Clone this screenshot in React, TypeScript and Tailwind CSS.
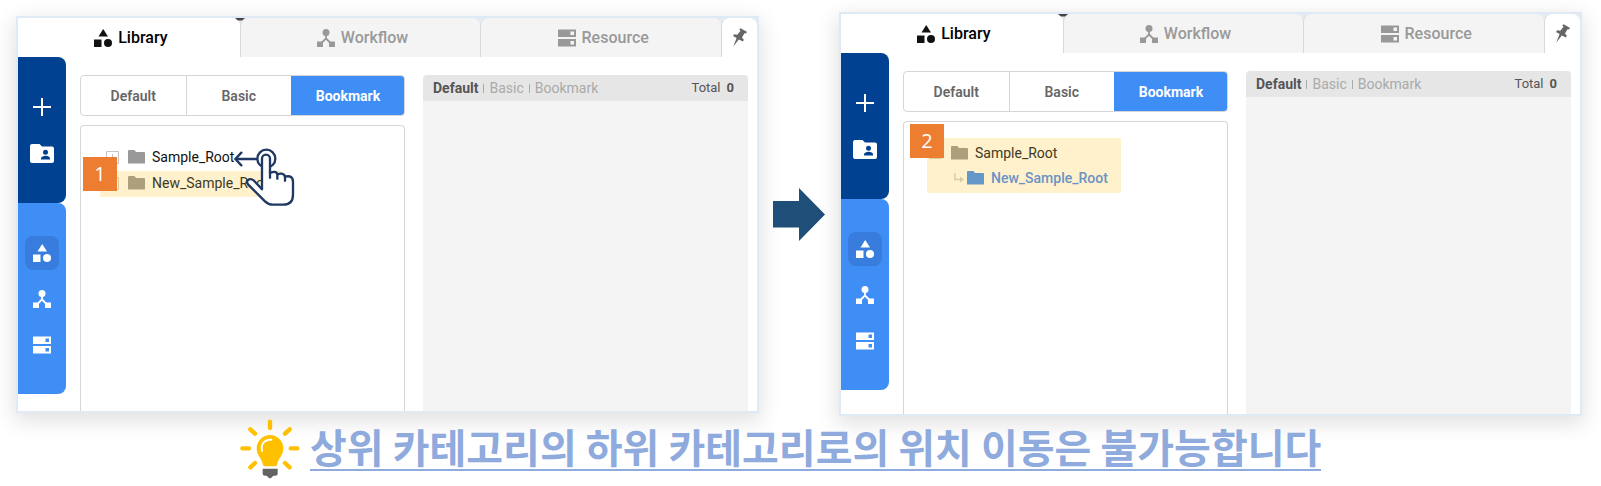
import React from "react";

type IconProps = { className?: string };

function ShapesIcon({ className }: IconProps) {
  return (
    <svg viewBox="0 0 18 18" className={className} fill="currentColor" aria-hidden="true">
      <path d="M9.2 0L14 7.5H4.5z" />
      <path d="M0 10.5h7.5V18H0z" />
      <circle cx="14" cy="14" r="4" />
    </svg>
  );
}

function WorkflowIcon({ className }: IconProps) {
  return (
    <svg viewBox="0 0 18 18" className={className} fill="currentColor" aria-hidden="true">
      <circle cx="9" cy="3.5" r="3.5" />
      <path d="M0 12.5h6V18H0zM12 12.5h6V18h-6z" />
      <path d="M9 5v4.5L4.5 14M9 9.500L13.5 14" fill="none" stroke="currentColor" strokeWidth="1.8" />
    </svg>
  );
}

function ResourceIcon({ className }: IconProps) {
  return (
    <svg viewBox="0 0 18 18" className={className} fill="currentColor" fillRule="evenodd" aria-hidden="true">
      <path d="M0 .5h18v7.500H0zM12.500 2.500v3.500h3.500V2.500zM0 10h18v7.500H0zM12.500 12v3.500h3.500V12z" />
    </svg>
  );
}

function PlusIcon() {
  return (
    <svg viewBox="0 0 18 18" className="size-[18px]" aria-hidden="true">
      <path d="M9 0v18M0 9h18" stroke="currentColor" strokeWidth="2" />
    </svg>
  );
}

function SharedFolderIcon() {
  return (
    <svg viewBox="0 0 24 19" className="h-[19px] w-6" aria-hidden="true">
      <path d="M2 0h7.500l2.500 2.500h10a2 2 0 0 1 2 2V17a2 2 0 0 1-2 2H2a2 2 0 0 1-2-2V2a2 2 0 0 1 2-2z" fill="currentColor" />
      <circle cx="15.500" cy="8.300" r="2.500" fill="#004191" />
      <path d="M11 15.500v-1.200c0-1.600 2.800-2.500 4.500-2.500s4.500.9 4.500 2.500v1.200z" fill="#004191" />
    </svg>
  );
}

function FolderIcon({ className }: IconProps) {
  return (
    <svg viewBox="0 0 17 14" className={`h-[14px] w-[17px] shrink-0 ${className ?? ""}`} fill="currentColor" aria-hidden="true">
      <path d="M1 0h5.500l1.500 2h8q1 0 1 1v10.500H0V1q0-1 1-1z" />
    </svg>
  );
}

function PinIcon() {
  return (
    <svg viewBox="0 0 16 20" className="h-5 w-4" fill="#666" aria-hidden="true">
      <path d="M7.300 1.600L8.600.2 14.800 3.800 14.200 5.600 12.500 5.300 10 9.500 11.800 11.800 11 13.500 6.800 11.400 1.300 18.500 4.600 10.100 1 8 2.200 6.300 5.300 6.700 8.500 2.800z" />
    </svg>
  );
}

function HandIcon() {
  return (
    <svg viewBox="0 0 186 177" className="h-[59px] w-[62px]" fill="none" stroke="#1f3864" strokeWidth="7" strokeLinecap="round" strokeLinejoin="round" aria-hidden="true">
      <path d="M72 33H7M25 14L7 33l18 19" />
      <circle cx="100" cy="32" r="27" />
      <path
        d="M87 124V32a12 12 0 0 1 24 0V75q20-8 22 4q20-6 23 7q24-6 24 16v38q0 30-30 30h-30q-14 0-24-10L45 109q-6-8 0-13q8-6 18 2z"
        fill="#fff"
      />
      <path d="M111 72v17M133 78v14M156 84v14" />
    </svg>
  );
}

function BulbIcon() {
  return (
    <svg viewBox="0 0 180 180" className="size-[60px] shrink-0" aria-hidden="true">
      <path
        d="M90 8v19M7 88h20M152 88h20M31 31l14 13M149 31l-14 13M31 145l14-13M149 145l-14-13"
        stroke="#ffc000"
        strokeWidth="13"
        strokeLinecap="round"
      />
      <path d="M90 48a40 40 0 0 1 40 40c0 22-14 28-19 49q-1 5-6 5H75q-5 0-6-5C64 116 50 110 50 88a40 40 0 0 1 40-40z" fill="#ffc000" />
      <path d="M66 96C62 76 72 61 94 62" fill="none" stroke="#fff" strokeWidth="6" strokeLinecap="round" />
      <path d="M68 149h45v15q0 6-7 6h-6l-6 6q-4 3-8 0l-6-6h-5q-7 0-7-6z" fill="#636363" />
    </svg>
  );
}

function TopTabs() {
  const tab = "flex items-center justify-center gap-1.5 text-base font-medium";
  return (
    <div className="relative flex h-[39px] bg-[#e3ebf5]">
      <button type="button" className={`${tab} w-[30%] rounded-tr-lg bg-white pl-1 text-black`}>
        <ShapesIcon className="size-[18px] text-[#111]" />
        Library
      </button>
      <button type="button" className={`${tab} flex-1 rounded-t-lg border-l border-[#d9d9d9] bg-[#f4f4f4] pl-1 text-[#999]`}>
        <WorkflowIcon className="size-[18px]" />
        Workflow
      </button>
      <button type="button" className={`${tab} flex-1 rounded-t-lg border-l border-[#d9d9d9] bg-[#f4f4f4] pl-1 text-[#999]`}>
        <ResourceIcon className="size-[18px]" />
        Resource
      </button>
      <button type="button" aria-label="Pin" className="flex w-9 items-center justify-center rounded-t-lg border-l border-[#d9d9d9] bg-white">
        <PinIcon />
      </button>
      <svg viewBox="0 0 10 3" className="absolute top-0 left-[30%] h-[3px] w-2.5 -translate-x-1/2" aria-hidden="true">
        <path d="M0 0h10L7 2.500H3z" fill="#444" />
      </svg>
    </div>
  );
}

function SideBar() {
  const item = "flex size-[34px] items-center justify-center rounded-lg";
  const group = "flex flex-col items-center gap-3 rounded-r-lg";
  return (
    <nav className="w-12 shrink-0 text-white">
      <div className={`${group} bg-[#004191] py-[33px]`}>
        <button type="button" aria-label="Add" className={item}><PlusIcon /></button>
        <button type="button" aria-label="Shared folder" className={item}><SharedFolderIcon /></button>
      </div>
      <div className={`${group} bg-[#3f8ef5] pt-[33px] pb-8`}>
        <button type="button" aria-label="Library" className={`${item} bg-[#387ddd]`}><ShapesIcon className="size-[18px]" /></button>
        <button type="button" aria-label="Workflow" className={item}><WorkflowIcon className="size-[18px]" /></button>
        <button type="button" aria-label="Resource" className={item}><ResourceIcon className="size-[18px]" /></button>
      </div>
    </nav>
  );
}

function FilterButtons() {
  const base = "flex-1 text-sm font-semibold";
  return (
    <div className="flex h-[41px] overflow-hidden rounded border border-[#d6d6d6] text-[#666]">
      <button type="button" className={base}>Default</button>
      <button type="button" className={`${base} border-l border-[#d6d6d6]`}>Basic</button>
      <button type="button" className="-my-px -mr-px w-[114px] bg-[#3f8ef5] text-sm font-bold text-white">Bookmark</button>
    </div>
  );
}

function Expander({ className }: IconProps) {
  return (
    <svg viewBox="0 0 13 13" className={`mr-[9px] size-[13px] shrink-0 ${className ?? ""}`} fill="none" stroke="currentColor" aria-hidden="true">
      <path d="M.5.500h12v12H.5zM6.500 3v7M3 6.500h7" />
    </svg>
  );
}

function Badge({ value, className }: { value: string; className: string }) {
  return (
    <span className={`absolute flex size-[34px] items-center justify-center bg-[#ed7d31] font-['Open_Sans',sans-serif] text-xl text-white ${className}`}>
      {value}
    </span>
  );
}

function Screen({ className, children }: { className: string; children: React.ReactNode }) {
  return (
    <section className={`flex flex-1 flex-col border-2 border-[#dfeaf5] bg-white shadow-[0_6px_20px_2px_rgba(0,0,0,0.12)] ${className}`}>
      <TopTabs />
      <div className="flex flex-1">
        <SideBar />
        <div className="ml-3.5 flex flex-1 flex-col gap-[9px] pt-[18px]">
          <FilterButtons />
          <div className="relative flex-1 rounded-t border-x border-t border-[#d6d6d6] text-sm">{children}</div>
        </div>
        <div className="mr-[9px] ml-[18px] flex flex-1 flex-col pt-[18px]">
          <div className="flex h-[26px] items-center justify-between rounded-t bg-[#e6e6e6] pr-3.5 pl-2.5 text-sm text-[#aaa]">
            <div className="flex items-center gap-[5px]">
              <b className="text-[#555]">Default</b>
              <i className="h-[9px] w-px bg-[#aaa]" />
              <span>Basic</span>
              <i className="h-[9px] w-px bg-[#aaa]" />
              <span>Bookmark</span>
            </div>
            <div className="flex gap-1.5 text-[13px] text-[#555]">
              Total <b>0</b>
            </div>
          </div>
          <div className="flex-1 bg-[#f4f4f4]" />
        </div>
      </div>
    </section>
  );
}

export default function App() {
  return (
    <main className="bg-white pb-2 font-['Roboto',sans-serif]">
      <div className="flex items-start pt-3 pr-[19px] pl-4">
        <Screen className="mt-1 min-h-[397px]">
          <ul className="pt-[19px]">
            <li className="ml-[19px] flex h-[26px] items-center pb-0.5 pl-1.5 text-[#111]">
              <Expander className="text-[#c4c4c4]" />
              <FolderIcon className="mr-[7px] text-[#999]" />
              Sample_Root
            </li>
            <li className="ml-[19px] flex h-[26px] w-[182px] items-center bg-[#fff1cc] pb-0.5 pl-1.5 text-[#40391f]">
              <Expander className="text-[#d8cba0]" />
              <FolderIcon className="mr-[7px] text-[#ad9f7b]" />
              New_Sample_Root
            </li>
          </ul>
          <Badge value="1" className="top-[31px] left-0.5" />
          <div className="absolute top-[22px] left-[152px]">
            <HandIcon />
          </div>
        </Screen>

        <div className="flex w-20 shrink-0 justify-center pt-44">
          <svg viewBox="0 0 52 53" className="h-[53px] w-[52px]" aria-hidden="true">
            <path d="M0 13h26V0l26 26.500L26 53V39.500H0z" fill="#1f4e79" />
          </svg>
        </div>

        <Screen className="min-h-[404px]">
          <ul className="mt-4 ml-[23px] w-[194px] bg-[#fff1cc] pt-0.5 pb-[3px]">
            <li className="flex h-[25px] items-center pl-0.5 text-[#40391f]">
              <Expander className="text-[#d8cba0]" />
              <FolderIcon className="mr-[7px] text-[#ad9f7b]" />
              Sample_Root
            </li>
            <li className="flex h-[25px] items-center pl-[27px] font-medium text-[#6b93c6]">
              <svg viewBox="0 0 10 10" className="mr-[3px] size-2.5 shrink-0" aria-hidden="true">
                <path d="M.8 0v6.500H7" fill="none" stroke="#d8cba0" strokeWidth="1.300" />
                <path d="M6 3.500l4 3-4 3z" fill="#d8cba0" />
              </svg>
              <FolderIcon className="mr-[7px] text-[#6497c8]" />
              New_Sample_Root
            </li>
          </ul>
          <Badge value="2" className="top-0.5 left-1.5" />
        </Screen>
      </div>

      <div className="relative flex items-start gap-2.5 pt-[3px] pl-60">
        <BulbIcon />
        <p className="mt-1 border-b-2 border-[#8faadc] font-['Noto_Sans_CJK_KR',sans-serif] text-[40px] leading-[46px] font-bold whitespace-nowrap text-[#8faadc]">
          상위 카테고리의 하위 카테고리로의 위치 이동은 불가능합니다
        </p>
      </div>
    </main>
  );
}
